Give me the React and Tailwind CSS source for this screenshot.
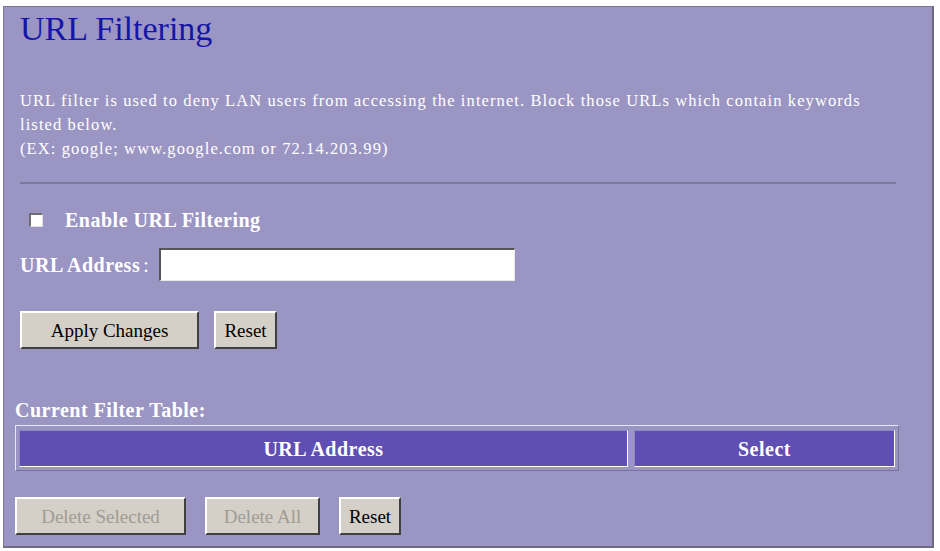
import React from "react";

const serif = { fontFamily: '"Liberation Serif", "Times New Roman", serif' };

const Btn = ({ children, disabled, className = "" }) => (
  <button
    type="button"
    className={`h-[38px] bg-[#d4d0c8] border-t-2 border-l-2 border-t-white border-l-white border-b-2 border-r-2 border-b-[#404040] border-r-[#404040] text-[19px] leading-none ${
      disabled ? "text-[#a09c94]" : "text-black"
    } ${className}`}
  >
    {children}
  </button>
);

export default function App() {
  return (
    <div className="w-[940px] h-[551px] bg-white overflow-hidden" style={serif}>
      <div className="ml-[3px] mt-[6px] w-[931px] h-[542px] bg-[#9b95c4] border-t border-l border-[#7a7690] border-r-2 border-b-2 border-r-[#6e6a80] border-b-[#6e6a80]">
        {/* title */}
        <h1 className="pl-[16px] pt-[3px] text-[34px] leading-[37px] text-[#1515a8]">
          URL Filtering
        </h1>

        {/* description */}
        <div className="pl-[16px] pt-[42px] pr-[42px] text-[16.5px] leading-[24px] tracking-[1.1px] text-white">
          <p>
            URL filter is used to deny LAN users from accessing the internet. Block those URLs which contain keywords
            listed below.
          </p>
          <p>(EX: google; www.google.com or 72.14.203.99)</p>
        </div>

        <div className="ml-[16px] mt-[21px] w-[876px] border-t-2 border-[#7d789e]" />

        {/* enable */}
        <div className="mt-[21px] ml-[25px] flex items-center gap-[22px]">
          <span className="w-[14px] h-[14px] bg-white border-t-2 border-l-2 border-[#6f6f6f] border-b border-r border-b-[#e0e0e0] border-r-[#e0e0e0]" />
          <span className="text-[20px] font-bold tracking-[0.5px] text-white">Enable URL Filtering</span>
        </div>

        {/* url address */}
        <div className="mt-[13px] ml-[16px] flex items-center gap-[10px]">
          <span className="text-[20px] font-bold tracking-[0.5px] text-white">
            URL Address<span className="font-normal pl-[3px]">:</span>
          </span>
          <input
            type="text"
            className="w-[356px] h-[33px] bg-white border-t-2 border-l-2 border-[#555] border-b border-r border-b-[#e8e8e8] border-r-[#e8e8e8] outline-none"
          />
        </div>

        {/* apply */}
        <div className="mt-[30px] ml-[16px] flex gap-[15px]">
          <Btn className="w-[179px]">Apply Changes</Btn>
          <Btn className="w-[63px]">Reset</Btn>
        </div>

        {/* table */}
        <div className="mt-[51px] ml-[11px] text-[20px] font-bold tracking-[0.5px] text-white leading-[20px]">
          Current Filter Table:
        </div>
        <div className="mt-[5px] ml-[11px] w-[884px] border border-[#e8e6f4] border-r-[#77739a] border-b-[#77739a] pt-[4px] pb-[3px] px-[3px]">
          <div className="flex gap-[6px] text-[20px] font-bold tracking-[0.5px] text-white">
            <div className="w-[609px] h-[37px] flex items-center justify-center bg-[#5f4fb2] border border-[#8d86c4] border-r-white border-b-white">
              URL Address
            </div>
            <div className="flex-1 h-[37px] flex items-center justify-center bg-[#5f4fb2] border border-[#8d86c4] border-r-white border-b-white">
              Select
            </div>
          </div>
        </div>

        {/* delete buttons */}
        <div className="mt-[26px] ml-[11px] flex gap-[19px]">
          <Btn disabled className="w-[171px]">Delete Selected</Btn>
          <Btn disabled className="w-[115px]">Delete All</Btn>
          <Btn className="w-[62px]">Reset</Btn>
        </div>
      </div>
    </div>
  );
}
